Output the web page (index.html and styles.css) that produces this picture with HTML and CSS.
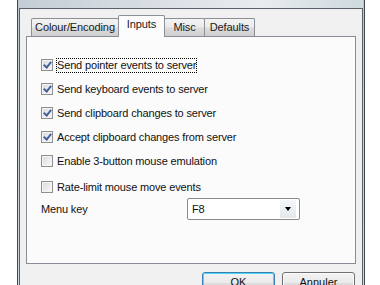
FILE: index.html
```html
<!DOCTYPE html>
<html>
<head>
<meta charset="utf-8">
<link rel="stylesheet" href="styles.css">
</head>
<body>
<div class="window">
  <div class="titlebar"></div>
  <div class="client">
    <div class="tabs">
      <div class="tab tab-colour">Colour/Encoding</div>
      <div class="tab tab-inputs active">Inputs</div>
      <div class="tab tab-misc">Misc</div>
      <div class="tab tab-defaults">Defaults</div>
    </div>
    <div class="panel">
      <div class="options">
        <div class="opt"><span class="cb checked"></span><span class="lbl focus">Send pointer events to server</span></div>
        <div class="opt"><span class="cb checked"></span><span class="lbl">Send keyboard events to server</span></div>
        <div class="opt"><span class="cb checked"></span><span class="lbl">Send clipboard changes to server</span></div>
        <div class="opt"><span class="cb checked"></span><span class="lbl">Accept clipboard changes from server</span></div>
        <div class="opt"><span class="cb"></span><span class="lbl">Enable 3-button mouse emulation</span></div>
        <div class="opt opt-last"><span class="cb"></span><span class="lbl">Rate-limit mouse move events</span></div>
      </div>
      <div class="menukey">
        <span class="mk-label">Menu key</span>
        <div class="select"><span class="sel-value">F8</span><span class="sel-btn"><span class="arrow"></span></span></div>
      </div>
    </div>
    <div class="buttons">
      <div class="btn default">OK</div>
      <div class="btn">Annuler</div>
    </div>
  </div>
</div>
</body>
</html>
```
FILE: styles.css
```css
html, body {
  margin: 0;
  padding: 0;
}
body {
  width: 380px;
  height: 285px;
  overflow: hidden;
  background: #ffffff;
  font-family: "Liberation Sans", Arial, sans-serif;
  font-size: 11px;
  color: #000;
}
.window {
  margin-left: 17px;
  width: 344px;
  height: 300px;
  border-left: 1px solid #3f4850;
  border-right: 1px solid #3f4850;
  padding: 0 1px;
  background: linear-gradient(180deg, #bcc6cf 0%, #d2dbe2 100%);
}
.titlebar {
  height: 8px;
  background: linear-gradient(90deg, #c4cdd5 0%, #d9dfe4 40%, #e7ecef 70%, #cfd9de 100%);
}
.client {
  border: 1px solid #5b6168;
  border-bottom: none;
  background: #f0f0f0;
  height: 300px;
}
.tabs {
  display: flex;
  align-items: flex-end;
  height: 21px;
  margin: 6px 0 0 11px;
  position: relative;
  z-index: 1;
}
.tab {
  box-sizing: border-box;
  height: 18px;
  border: 1px solid #8c8f96;
  border-bottom: none;
  border-radius: 2px 2px 0 0;
  background: linear-gradient(180deg, #f3f3f3 0%, #ebebeb 45%, #dcdcdc 55%, #cfcfcf 100%);
  text-align: center;
  line-height: 17px;
  color: #1a1a1a;
  white-space: nowrap;
  letter-spacing: -0.1px;
}
.tab + .tab {
  margin-left: -1px;
}
.tab-colour { width: 88px; }
.tab-inputs { width: 47px; }
.tab-misc { width: 41px; }
.tab-defaults { width: 51px; }
.tab.active {
  height: 22px;
  margin-bottom: -1px;
  margin-left: -1px;
  margin-right: -1px;
  background: #fcfcfc;
  line-height: 17px;
  position: relative;
  z-index: 2;
}
.tab.active + .tab {
  margin-left: 0;
}
.panel {
  box-sizing: border-box;
  margin: 0 6px;
  height: 228px;
  border: 1px solid #898c95;
  background: #fbfbfb;
  padding: 21px 0 0 14px;
  letter-spacing: -0.15px;
  color: #111;
}
.options {
  display: flex;
  flex-direction: column;
  gap: 10px;
}
.opt {
  display: flex;
  align-items: center;
  height: 14px;
}
.opt-last {
  margin-top: 2px;
}
.cb {
  box-sizing: border-box;
  width: 12px;
  height: 12px;
  border: 1px solid #8e8f8f;
  background: linear-gradient(135deg, #d8d8d8 0%, #ededed 60%, #f8f8f8 100%);
  box-shadow: inset 0 0 0 1px #f4f4f4;
  position: relative;
  flex: none;
}
.cb.checked::after {
  content: "";
  position: absolute;
  left: 3px;
  top: 0px;
  width: 3px;
  height: 6px;
  border-right: 2px solid #46619a;
  border-bottom: 2px solid #46619a;
  transform: rotate(40deg);
}
.lbl {
  margin-left: 3px;
  line-height: 13px;
  padding: 0;
  border: 1px dotted transparent;
  white-space: nowrap;
}
.lbl.focus {
  border-color: #000;
}
.menukey {
  display: flex;
  align-items: center;
  margin-top: 4px;
  height: 22px;
}
.mk-label {
  width: 146px;
}
.select {
  box-sizing: border-box;
  width: 113px;
  height: 22px;
  border: 1px solid #8a8a8a;
  border-radius: 2px;
  background: #fff;
  display: flex;
  align-items: center;
  justify-content: space-between;
}
.sel-value {
  padding-left: 4px;
}
.sel-btn {
  width: 16px;
  height: 18px;
  margin-right: 3px;
  display: flex;
  align-items: center;
  justify-content: center;
  background: linear-gradient(180deg, #f4f6f8, #e4e8ee);
}
.arrow {
  width: 0;
  height: 0;
  border-left: 3.5px solid transparent;
  border-right: 3.5px solid transparent;
  border-top: 4px solid #000;
}
.buttons {
  display: flex;
  justify-content: flex-end;
  gap: 7px;
  padding: 8px 7px 0 0;
}
.btn {
  box-sizing: border-box;
  width: 73px;
  height: 23px;
  border: 1px solid #707070;
  border-radius: 3px;
  background: linear-gradient(180deg, #f2f2f2 0%, #ebebeb 45%, #dddddd 50%, #cfcfcf 100%);
  box-shadow: inset 0 0 0 1px #fcfcfc;
  text-align: center;
  line-height: 19px;
  color: #111;
}
.btn.default {
  border-color: #3c7fb1;
  box-shadow: inset 0 0 0 1px #48d8fb;
}
```
